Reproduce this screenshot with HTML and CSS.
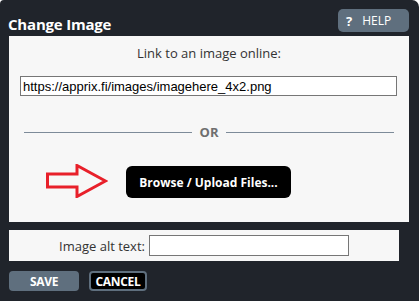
FILE: index.html
```html
<!DOCTYPE html>
<html>
<head>
<meta charset="utf-8">
<link rel="stylesheet" href="styles.css">
</head>
<body>
<div class="dialog">
  <div class="header">
    <div class="title">Change Image</div>
    <button class="help"><span class="q">?</span>HELP</button>
  </div>
  <div class="panel">
    <div class="label">Link to an image online:</div>
    <input class="url" type="text" value="https://apprix.fi/images/imagehere_4x2.png">
    <div class="or-row"><span class="line"></span><span class="or">OR</span><span class="line"></span></div>
    <div class="action-row">
      <svg class="arrow" width="62" height="34" viewBox="0 0 62 34">
        <polygon points="1.5,10 31,10 31,1.5 59.5,17 31,32.5 31,23 1.5,23" fill="none" stroke="#e8202a" stroke-width="3"/>
      </svg>
      <button class="browse">Browse / Upload Files...</button>
    </div>
  </div>
  <div class="alt-panel">
    <span class="alt-label">Image alt text:</span>
    <input class="alt-input" type="text">
  </div>
  <div class="footer">
    <button class="save">SAVE</button>
    <button class="cancel">CANCEL</button>
  </div>
</div>
</body>
</html>
```
FILE: styles.css
```css
html, body {
  margin: 0;
  padding: 0;
  background: #ffffff;
}
.dialog {
  width: 419px;
  height: 301px;
  background: #20242b;
  border-radius: 4px 7px 0 0;
  box-sizing: border-box;
  overflow: hidden;
  font-family: "Open Sans", "Noto Sans", sans-serif;
}
.header {
  height: 36px;
  display: flex;
  justify-content: space-between;
  align-items: flex-start;
  padding: 0 10px 0 8px;
}
.title {
  margin-top: 14px;
  line-height: 20px;
  font-size: 15px;
  font-weight: 700;
  color: #ffffff;
  letter-spacing: -0.2px;
}
.help {
  margin-top: 9px;
  width: 71px;
  height: 23px;
  border: none;
  border-radius: 5px;
  background: #5f6f7e;
  color: #ffffff;
  font-family: "Open Sans", "Noto Sans", sans-serif;
  font-size: 12px;
  padding: 0 0 0 8px;
  display: flex;
  align-items: center;
  justify-content: flex-start;
}
.help .q {
  font-weight: 700;
  margin-right: 10px;
  font-size: 13px;
}
.panel {
  margin: 0 10px 0 9px;
  height: 186px;
  background: #f7f7f7;
  display: flex;
  flex-direction: column;
  padding-top: 8px;
  box-sizing: border-box;
}
.label {
  text-align: center;
  font-size: 13px;
  line-height: 18px;
  color: #333333;
}
.url {
  margin: 14px 12px 0 11px;
  height: 20px;
  box-sizing: border-box;
  border: 1px solid #767676;
  padding: 0 2px;
  font-family: "Liberation Sans", Arial, sans-serif;
  font-size: 13px;
  color: #000;
  background: #fff;
}
.or-row {
  margin-top: 28px;
  height: 16px;
  display: flex;
  align-items: center;
  padding: 0 15px;
  gap: 6px;
}
.or-row .line {
  flex: 1;
  height: 1px;
  background: #7d8b99;
}
.or {
  font-size: 13px;
  font-weight: 700;
  color: #6f6f6f;
  line-height: 16px;
  padding: 0 2px;
}
.action-row {
  margin-top: 26px;
  display: flex;
  align-items: center;
  padding-left: 37px;
  gap: 18px;
}
.arrow {
  display: block;
  margin-top: -2px;
}
.browse {
  width: 165px;
  height: 32px;
  background: #000;
  color: #fff;
  border: none;
  border-radius: 6px;
  font-family: "Open Sans", "Noto Sans", sans-serif;
  font-weight: 700;
  font-size: 12px;
  padding: 0;
}
.alt-panel {
  margin: 8px 20px 0 9px;
  height: 31px;
  background: #f7f7f7;
  display: flex;
  align-items: center;
  justify-content: center;
  gap: 4px;
}
.alt-label {
  font-size: 13px;
  color: #333333;
}
.alt-input {
  width: 200px;
  height: 21px;
  box-sizing: border-box;
  border: 1px solid #767676;
  background: #fff;
  padding: 0;
  margin-left: 0;
}
.footer {
  margin-top: 10px;
  padding-left: 9px;
  display: flex;
  gap: 10px;
}
.save, .cancel {
  height: 20px;
  box-sizing: border-box;
  border-radius: 4px;
  color: #fff;
  font-family: "Open Sans", "Noto Sans", sans-serif;
  font-weight: 700;
  font-size: 12px;
  padding: 0;
  letter-spacing: -0.3px;
}
.save {
  width: 70px;
  background: #5f6f7e;
  border: none;
}
.cancel {
  width: 58px;
  background: #000;
  border: 2px solid #5f6f7e;
}
```
